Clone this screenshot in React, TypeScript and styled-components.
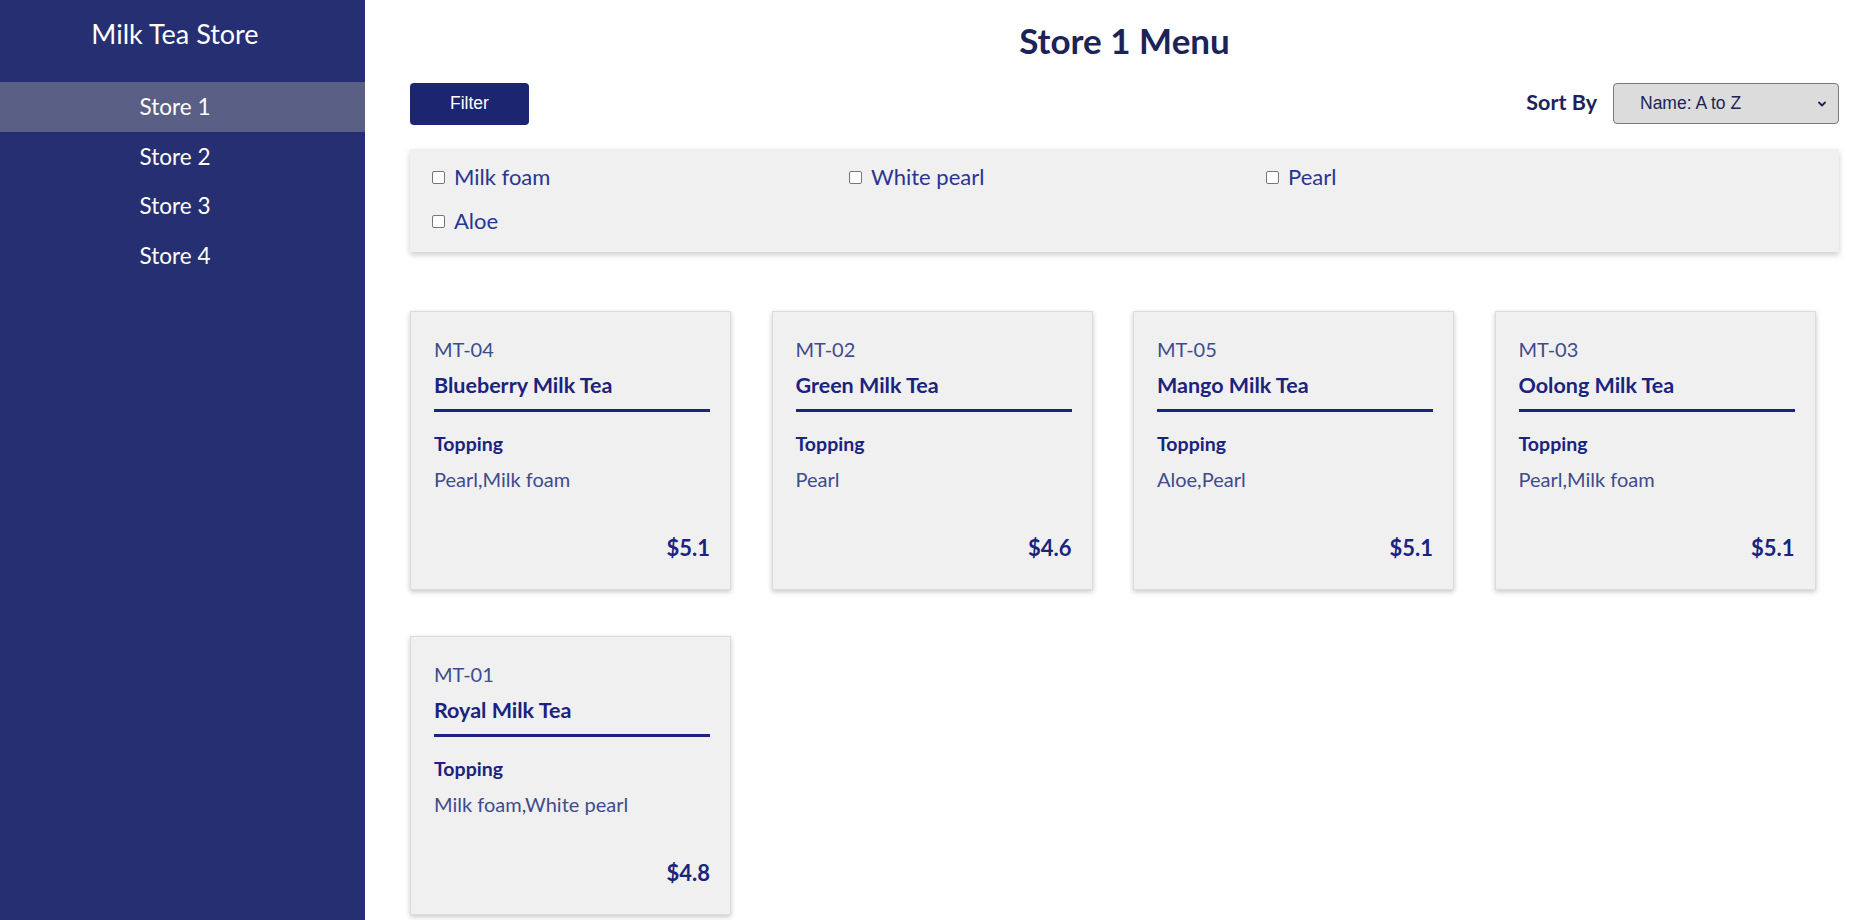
import React from 'react';
import styled, { createGlobalStyle } from 'styled-components';

interface Drink {
  id: string;
  name: string;
  toppings: string[];
  price: number;
}

const drinks: Drink[] = [
  { id: 'MT-04', name: 'Blueberry Milk Tea', toppings: ['Pearl', 'Milk foam'], price: 5.1 },
  { id: 'MT-02', name: 'Green Milk Tea', toppings: ['Pearl'], price: 4.6 },
  { id: 'MT-05', name: 'Mango Milk Tea', toppings: ['Aloe', 'Pearl'], price: 5.1 },
  { id: 'MT-03', name: 'Oolong Milk Tea', toppings: ['Pearl', 'Milk foam'], price: 5.1 },
  { id: 'MT-01', name: 'Royal Milk Tea', toppings: ['Milk foam', 'White pearl'], price: 4.8 }
];

const stores = ['Store 1', 'Store 2', 'Store 3', 'Store 4'];
const toppingOptions = ['Milk foam', 'White pearl', 'Pearl', 'Aloe'];

const GlobalStyle = createGlobalStyle`
  html, body {
    margin: 0;
    padding: 0;
    background: #ffffff;
    font-family: Lato, 'Open Sans', sans-serif;
  }
`;

const Layout = styled.div`
  display: flex;
  min-height: 100vh;
`;

const Sidebar = styled.nav`
  width: 365px;
  flex-shrink: 0;
  box-sizing: border-box;
  padding-right: 15px;
  background: #262f72;
  color: #ffffff;
  min-height: 100vh;
`;

const Brand = styled.div`
  height: 66px;
  display: flex;
  align-items: center;
  justify-content: center;
  font-size: 27px;
  padding-bottom: 16px;
`;

const StoreLink = styled.div<{ $active?: boolean }>`
  height: 49.5px;
  display: flex;
  align-items: center;
  justify-content: center;
  font-size: 22.5px;
  margin-right: -15px;
  padding-right: 15px;
  background: ${({ $active }) => ($active ? '#5a5f86' : 'transparent')};
  cursor: pointer;
`;

const Main = styled.main`
  flex: 1;
  padding: 0 37px 0 45px;
`;

const Title = styled.h1`
  margin: 0;
  height: 79px;
  display: flex;
  align-items: center;
  justify-content: center;
  font-size: 35px;
  font-weight: 700;
  color: #1c2358;
`;

const Toolbar = styled.div`
  display: flex;
  align-items: center;
  justify-content: space-between;
  margin-top: 3.5px;
`;

const FilterButton = styled.button`
  width: 119px;
  height: 42px;
  border: none;
  border-radius: 4px;
  background: #1b2570;
  color: #ffffff;
  font-family: 'Liberation Sans', Arial, sans-serif;
  font-size: 17.5px;
  cursor: pointer;
`;

const SortGroup = styled.div`
  display: flex;
  align-items: center;
  gap: 16px;
`;

const SortLabel = styled.span`
  font-size: 21.5px;
  font-weight: 700;
  color: #1c2358;
  padding-bottom: 4px;
`;

const SortSelect = styled.div`
  width: 226px;
  height: 41px;
  box-sizing: border-box;
  border: 1px solid #7a7a7a;
  border-radius: 4px;
  background: #dcdcdc;
  display: flex;
  align-items: center;
  justify-content: space-between;
  padding: 0 10px 0 26px;
  font-family: 'Liberation Sans', Arial, sans-serif;
  font-size: 17.5px;
  color: #1c2358;
`;

const FilterPanel = styled.div`
  margin-top: 24px;
  background: #f0f0f0;
  box-shadow: 0 3px 6px rgba(0, 0, 0, 0.2);
  padding: 12px 22px 15px;
  display: grid;
  grid-template-columns: repeat(3, 417px);
  row-gap: 12px;
`;

const CheckOption = styled.label`
  display: flex;
  align-items: center;
  gap: 9px;
  font-size: 22px;
  color: #283593;
  height: 32px;
`;

const CheckBox = styled.span`
  width: 11px;
  height: 11px;
  border: 1px solid #767676;
  border-radius: 2px;
  background: #ffffff;
  margin-top: 2px;
`;

const CardGrid = styled.div`
  margin-top: 59px;
  display: grid;
  grid-template-columns: repeat(4, 321px);
  column-gap: 40.5px;
  row-gap: 46px;
`;

const Card = styled.div`
  height: 279px;
  box-sizing: border-box;
  background: #f0f0f0;
  border: 1px solid #dcdcdc;
  box-shadow: 0 2px 5px rgba(0, 0, 0, 0.22);
  padding: 25px 20px 27.5px 23px;
  display: flex;
  flex-direction: column;
`;

const CardId = styled.div`
  font-size: 20px;
  color: #3f4b8c;
`;

const CardName = styled.div`
  margin-top: 11px;
  font-size: 21.5px;
  font-weight: 700;
  color: #1a237e;
  padding-bottom: 11px;
  border-bottom: 3px solid #1a237e;
`;

const SectionLabel = styled.div`
  margin-top: 20.5px;
  font-size: 19.5px;
  font-weight: 700;
  color: #1a237e;
`;

const ToppingText = styled.div`
  margin-top: 12px;
  font-size: 20px;
  color: #3f4b8c;
`;

const Price = styled.div`
  margin-top: auto;
  text-align: right;
  font-size: 22px;
  font-weight: 700;
  color: #1a237e;
`;

const Chevron = () => (
  <svg width="12" height="12" viewBox="0 0 12 12">
    <path d="M3 4.5 L6 7.5 L9 4.5" fill="none" stroke="#1c2358" strokeWidth="1.8" strokeLinecap="round" strokeLinejoin="round" />
  </svg>
);

const App = () => {
  return (
    <>
      <GlobalStyle />
      <Layout>
        <Sidebar>
          <Brand>Milk Tea Store</Brand>
          {stores.map((s, i) => (
            <StoreLink key={s} $active={i === 0}>{s}</StoreLink>
          ))}
        </Sidebar>
        <Main>
          <Title>Store 1 Menu</Title>
          <Toolbar>
            <FilterButton>Filter</FilterButton>
            <SortGroup>
              <SortLabel>Sort By</SortLabel>
              <SortSelect>
                <span>Name: A to Z</span>
                <Chevron />
              </SortSelect>
            </SortGroup>
          </Toolbar>
          <FilterPanel>
            {toppingOptions.map((t) => (
              <CheckOption key={t}>
                <CheckBox />
                {t}
              </CheckOption>
            ))}
          </FilterPanel>
          <CardGrid>
            {drinks.map((d) => (
              <Card key={d.id}>
                <CardId>{d.id}</CardId>
                <CardName>{d.name}</CardName>
                <SectionLabel>Topping</SectionLabel>
                <ToppingText>{d.toppings.join(',')}</ToppingText>
                <Price>${d.price}</Price>
              </Card>
            ))}
          </CardGrid>
        </Main>
      </Layout>
    </>
  );
};

export default App;
